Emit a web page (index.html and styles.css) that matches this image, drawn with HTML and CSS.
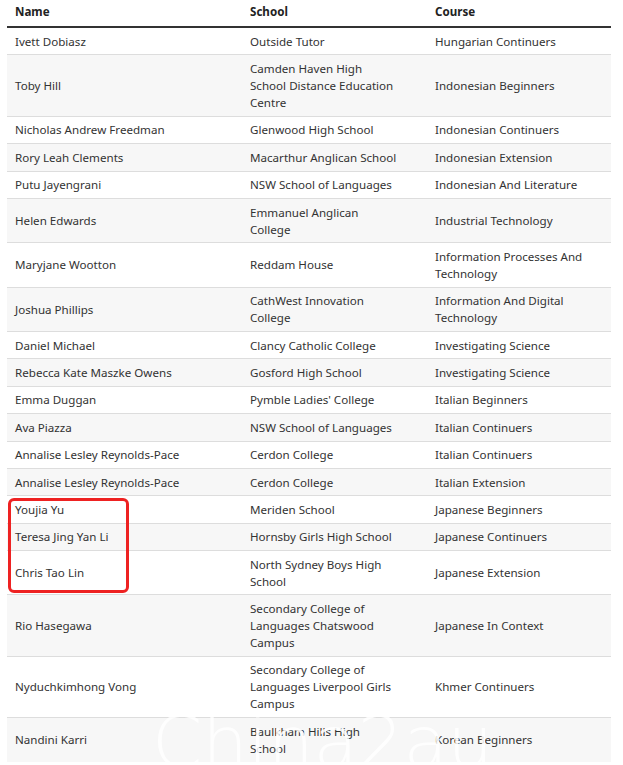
FILE: index.html
```html
<!DOCTYPE html>
<html lang="en">
  <head>
    <meta charset="UTF-8" />
    <meta name="viewport" content="width=device-width, initial-scale=1.0" />
    <title>Student Awards</title>
    <link rel="stylesheet" href="styles.css">
  </head>
  <body>
    <div class="wrap">
      <table class="results">
        <thead>
          <tr>
            <th class="col-name">Name</th>
            <th class="col-school">School</th>
            <th class="col-course">Course</th>
          </tr>
        </thead>
        <tbody>
          <tr><td>Ivett Dobiasz</td><td>Outside Tutor</td><td>Hungarian Continuers</td></tr>
          <tr><td>Toby Hill</td><td>Camden Haven High School Distance Education Centre</td><td>Indonesian Beginners</td></tr>
          <tr><td>Nicholas Andrew Freedman</td><td>Glenwood High School</td><td>Indonesian Continuers</td></tr>
          <tr><td>Rory Leah Clements</td><td>Macarthur Anglican School</td><td>Indonesian Extension</td></tr>
          <tr><td>Putu Jayengrani</td><td>NSW School of Languages</td><td>Indonesian And Literature</td></tr>
          <tr><td>Helen Edwards</td><td>Emmanuel Anglican College</td><td>Industrial Technology</td></tr>
          <tr><td>Maryjane Wootton</td><td>Reddam House</td><td>Information Processes And Technology</td></tr>
          <tr><td>Joshua Phillips</td><td>CathWest Innovation College</td><td>Information And Digital Technology</td></tr>
          <tr><td>Daniel Michael</td><td>Clancy Catholic College</td><td>Investigating Science</td></tr>
          <tr><td>Rebecca Kate Maszke Owens</td><td>Gosford High School</td><td>Investigating Science</td></tr>
          <tr><td>Emma Duggan</td><td>Pymble Ladies' College</td><td>Italian Beginners</td></tr>
          <tr><td>Ava Piazza</td><td>NSW School of Languages</td><td>Italian Continuers</td></tr>
          <tr><td>Annalise Lesley Reynolds-Pace</td><td>Cerdon College</td><td>Italian Continuers</td></tr>
          <tr><td>Annalise Lesley Reynolds-Pace</td><td>Cerdon College</td><td>Italian Extension</td></tr>
          <tr><td>Youjia Yu</td><td>Meriden School</td><td>Japanese Beginners</td></tr>
          <tr><td>Teresa Jing Yan Li</td><td>Hornsby Girls High School</td><td>Japanese Continuers</td></tr>
          <tr><td>Chris Tao Lin</td><td>North Sydney Boys High School</td><td>Japanese Extension</td></tr>
          <tr><td>Rio Hasegawa</td><td>Secondary College of Languages Chatswood Campus</td><td>Japanese In Context</td></tr>
          <tr><td>Nyduchkimhong Vong</td><td>Secondary College of Languages Liverpool Girls Campus</td><td>Khmer Continuers</td></tr>
          <tr><td>Nandini Karri</td><td>Baulkham Hills High School</td><td>Korean Beginners</td></tr>
        </tbody>
      </table>

      <!-- highlight around the Japanese students -->
      <div class="highlight"></div>
      <div class="watermark">China2au</div>
    </div>
  </body>
</html>
```

FILE: styles.css
```css
body {
  margin: 0;
  font-family: "Noto Sans", Arial, sans-serif;
  font-size: 11.6px;
  color: #333;
  background: #fff;
}
.wrap {
  position: relative;
  padding: 0 12px 0 7px;
  height: 765px;
  overflow: hidden;
}
.results {
  width: 604px;
  table-layout: fixed;
  border-collapse: collapse;
  line-height: 17px;
}
.results th {
  text-align: left;
  font-weight: bold;
  color: #222;
  padding: 3px 8px 6px;
  border-bottom: 2px solid #333;
}
.col-name {
  width: 219px;
}
.col-school {
  width: 169px;
}
.results td {
  padding: 4.7px 26px 4.7px 8px;
  border-top: 1px solid #ddd;
  vertical-align: middle;
}
.results td:nth-child(2) {
  padding-right: 29px;
}
.results tbody tr:nth-child(even) td {
  background: #f7f7f7;
}
.results tbody tr:first-child td {
  border-top: none;
}
.highlight {
  position: absolute;
  left: 8px;
  top: 498px;
  width: 115px;
  height: 89px;
  border: 3px solid #ee2222;
  border-radius: 6px;
}
.watermark {
  position: absolute;
  left: 152px;
  top: 700px;
  font-family: "DejaVu Sans", sans-serif;
  font-weight: 200;
  font-size: 72px;
  color: rgba(255, 255, 255, 0.85);
  pointer-events: none;
}
```
